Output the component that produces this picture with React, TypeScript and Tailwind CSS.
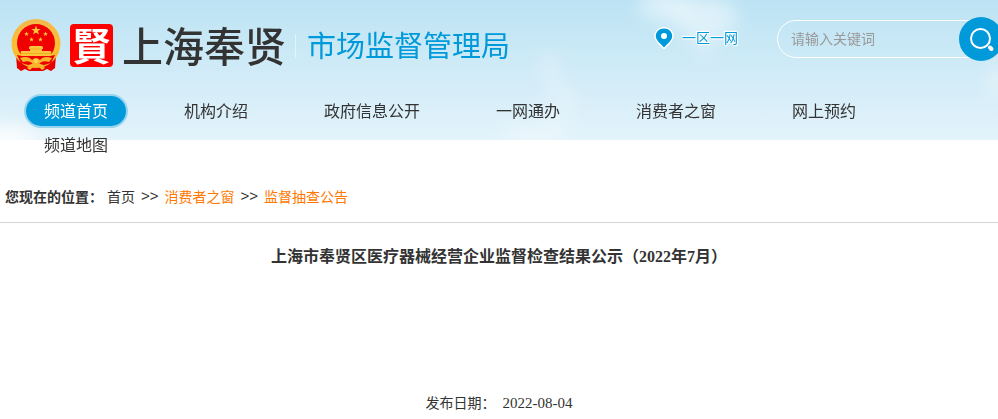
import React from "react";

const navItems = [
  "频道首页",
  "机构介绍",
  "政府信息公开",
  "一网通办",
  "消费者之窗",
  "网上预约",
  "频道地图",
];

const Star: React.FC<{ x: number; y: number; r: number }> = ({ x, y, r }) => {
  const points = Array.from({ length: 10 }, (_, i) => {
    const radius = i % 2 === 0 ? r : r * 0.4;
    const angle = (Math.PI / 5) * i - Math.PI / 2;
    return `${x + radius * Math.cos(angle)},${y + radius * Math.sin(angle)}`;
  }).join(" ");
  return <polygon points={points} fill="#fdc63a" />;
};

const Emblem: React.FC = () => (
  <svg viewBox="0 0 50 53" className="h-[53px] w-[50px]" aria-label="国徽" role="img">
    <defs>
      <linearGradient id="gold" x1="0" y1="0" x2="0" y2="1">
        <stop offset="0" stopColor="#f3bb50" />
        <stop offset="0.6" stopColor="#fcc232" />
        <stop offset="1" stopColor="#f6ab25" />
      </linearGradient>
    </defs>
    <path d="M5 36 L6 49 L10 52 L14 50 L18 52 H32 L36 50 L40 52 L44 49 L45 36 Z" fill="#e60000" />
    <circle cx="25" cy="24.500" r="24.500" fill="url(#gold)" />
    <circle cx="25" cy="24.500" r="22.500" fill="none" stroke="#f0b040" strokeWidth="1" strokeDasharray="2 2" />
    <circle cx="25" cy="24" r="19" fill="#f00000" />
    <Star x={25} y={11.5} r={5} />
    <Star x={15.5} y={15} r={2.6} />
    <Star x={34.5} y={15} r={2.6} />
    <Star x={20.5} y={20.5} r={2.6} />
    <Star x={29.5} y={20.5} r={2.6} />
    <path d="M18 28 L19.500 27 H30.500 L32 28 V30 H31 V32 H40 L41 37 H9 L10 32 H19 V30 H18 Z" fill="#fdc63a" />
    <path d="M19 30 H31 M10 34.500 H40" stroke="#eba020" strokeWidth="0.7" />
    <path d="M6 36 L16 38 L21 40 H29 L34 38 L44 36 L40 44 L33 46 L27 44.500 H23 L17 46 L10 44 Z" fill="#ed0000" />
    <path d="M9 39 Q17 36 21 41 Q25 37 29 41 Q33 36 41 39 L38 43 Q32 41 29 44 Q25 47 21 44 Q18 41 12 43 Z" fill="#f9b52b" />
    <circle cx="25" cy="42" r="2" fill="#fdd25a" />
    <path d="M16 49 L22 44 L25 46 L28 44 L34 49 L31 51 L28 48 H22 L19 51 Z" fill="#f9b52b" />
    <path d="M22 49 H28 L27 52 H23 Z" fill="#e60000" />
  </svg>
);

const Sky: React.FC = () => (
  <svg
    viewBox="0 0 998 140"
    preserveAspectRatio="none"
    aria-hidden="true"
    className="absolute inset-x-0 top-0 -z-10 h-[140px] w-full"
  >
    <defs>
      <linearGradient id="sky" x1="0" y1="0" x2="0" y2="1">
        <stop offset="0" stopColor="#bce3f4" />
        <stop offset="0.5" stopColor="#d0ebf7" />
        <stop offset="1" stopColor="#e3f3fb" />
      </linearGradient>
      <filter id="soft" x="-100%" y="-100%" width="300%" height="300%">
        <feGaussianBlur stdDeviation="9" />
      </filter>
    </defs>
    <rect width="998" height="140" fill="url(#sky)" />
    <g fill="#ffffff" filter="url(#soft)">
      <ellipse cx="665" cy="6" rx="26" ry="14" opacity="0.5" />
      <ellipse cx="705" cy="18" rx="32" ry="22" opacity="0.45" />
      <ellipse cx="705" cy="48" rx="14" ry="12" opacity="0.2" />
      <ellipse cx="5" cy="138" rx="30" ry="12" opacity="0.9" />
      <ellipse cx="65" cy="144" rx="44" ry="8" opacity="0.5" />
      <ellipse cx="550" cy="68" rx="12" ry="16" opacity="0.25" />
      <ellipse cx="535" cy="134" rx="36" ry="12" opacity="0.3" />
      <ellipse cx="562" cy="104" rx="16" ry="20" opacity="0.2" />
      <ellipse cx="998" cy="80" rx="9" ry="16" opacity="0.4" />
    </g>
  </svg>
);

const SearchForm: React.FC = () => (
  <form
    className="mt-1 -mr-[6px] flex h-[38px] w-[227px] shrink-0 items-center rounded-full border border-white"
    onSubmit={(e) => e.preventDefault()}
  >
    <input
      type="text"
      aria-label="请输入关键词"
      placeholder="请输入关键词"
      className="h-9 min-w-0 flex-1 bg-transparent pb-[2px] pl-[13px] text-sm outline-none placeholder:text-[#999]"
    />
    <button
      type="submit"
      aria-label="搜索"
      className="flex size-11 shrink-0 items-center justify-center rounded-full bg-[#0099d9]"
    >
      <svg viewBox="0 0 44 44" fill="none" stroke="white" strokeLinecap="round" className="size-11">
        <circle cx="21.500" cy="21.500" r="9.500" strokeWidth="2" />
        <path d="M31 30.500 L32.500 32" strokeWidth="4" />
      </svg>
    </button>
  </form>
);

const Header: React.FC = () => (
  <header className="relative isolate overflow-hidden pt-4">
    <Sky />
    <div className="flex items-start">
      <a href="#" className="mt-[3px] flex h-[53px] items-center pl-[11px] font-['KaiTi','Noto_Sans_CJK_SC',sans-serif]">
        <Emblem />
        <span className="ml-[9px] size-[43px] rounded-sm bg-[#ff0000] text-center text-[38px] leading-[40px] font-bold text-white">
          賢
        </span>
        <span className="mb-1 ml-[9px] text-[41px] leading-[48px] font-medium whitespace-nowrap text-[#333]">
          上海奉贤
        </span>
        <span className="ml-[9px] h-6 w-px bg-[#e4f4fb]" />
        <span className="mb-1 ml-[11px] text-[29px] leading-[48px] whitespace-nowrap text-[#0099d9]">
          市场监督管理局
        </span>
      </a>
      <a
        href="#"
        className="mr-[39px] ml-auto flex h-11 shrink-0 items-center gap-2 text-sm text-[#0099d9] [text-shadow:1px_0_1px_#fff,-1px_0_1px_#fff,0_1px_1px_#fff,0_-1px_1px_#fff,1px_1px_1px_#fff,-1px_-1px_1px_#fff]"
      >
        <svg viewBox="0 0 20 22" className="h-[22px] w-5">
          <path
            d="M10 1.500 C5 1.500 1.800 5 1.800 9 C1.800 13.500 7 17 10 20.500 C13 17 18.200 13.500 18.200 9 C18.200 5 15 1.500 10 1.500 Z"
            fill="#0099d9"
            stroke="#fff"
            strokeWidth="3"
            strokeLinejoin="round"
            paintOrder="stroke"
          />
          <circle cx="10" cy="9" r="3" fill="#fff" />
        </svg>
        <span className="mb-[2px]">一区一网</span>
      </a>
      <SearchForm />
    </div>
    <nav className="mt-[22px] pl-6">
      <ul className="flex flex-wrap gap-x-9">
        {navItems.map((item, i) => (
          <li key={item}>
            <a
              href="#"
              className={
                i === 0
                  ? "block rounded-full border-2 border-[#99d4ef] bg-[#0099d9] px-[18px] pb-[2px] leading-[28px] text-white"
                  : "block border-2 border-transparent px-[18px] pb-[2px] leading-[28px]"
              }
            >
              {item}
            </a>
          </li>
        ))}
      </ul>
    </nav>
  </header>
);

export default function App() {
  return (
    <div className="bg-white font-['Noto_Sans_CJK_SC',sans-serif] text-base text-[#333]">
      <Header />
      <nav
        aria-label="您现在的位置"
        className="flex items-center gap-[6px] border-b border-[#d5d5d5] pt-[22px] pb-[14px] pl-[5px] text-sm leading-6"
      >
        <span className="flex gap-1">
          <b>您现在的位置：</b>
          <a href="#">首页</a>
        </span>
        <span className="font-['Liberation_Sans',sans-serif] text-[15px]">&gt;&gt;</span>
        <a href="#" className="text-[#ff7800]">
          消费者之窗
        </a>
        <span className="font-['Liberation_Sans',sans-serif] text-[15px]">&gt;&gt;</span>
        <a href="#" className="text-[#ff7800]">
          监督抽查公告
        </a>
      </nav>
      <main className="text-center font-['Liberation_Serif','Noto_Sans_CJK_SC',serif]">
        <h1 className="mt-[22px] leading-6 font-bold">
          上海市奉贤区医疗器械经营企业监督检查结果公示（2022年7月）
        </h1>
        <p className="mt-[122px] text-sm leading-6">
          发布日期：
          <time className="ml-[7px] text-[15px]">2022-08-04</time>
        </p>
      </main>
    </div>
  );
}
